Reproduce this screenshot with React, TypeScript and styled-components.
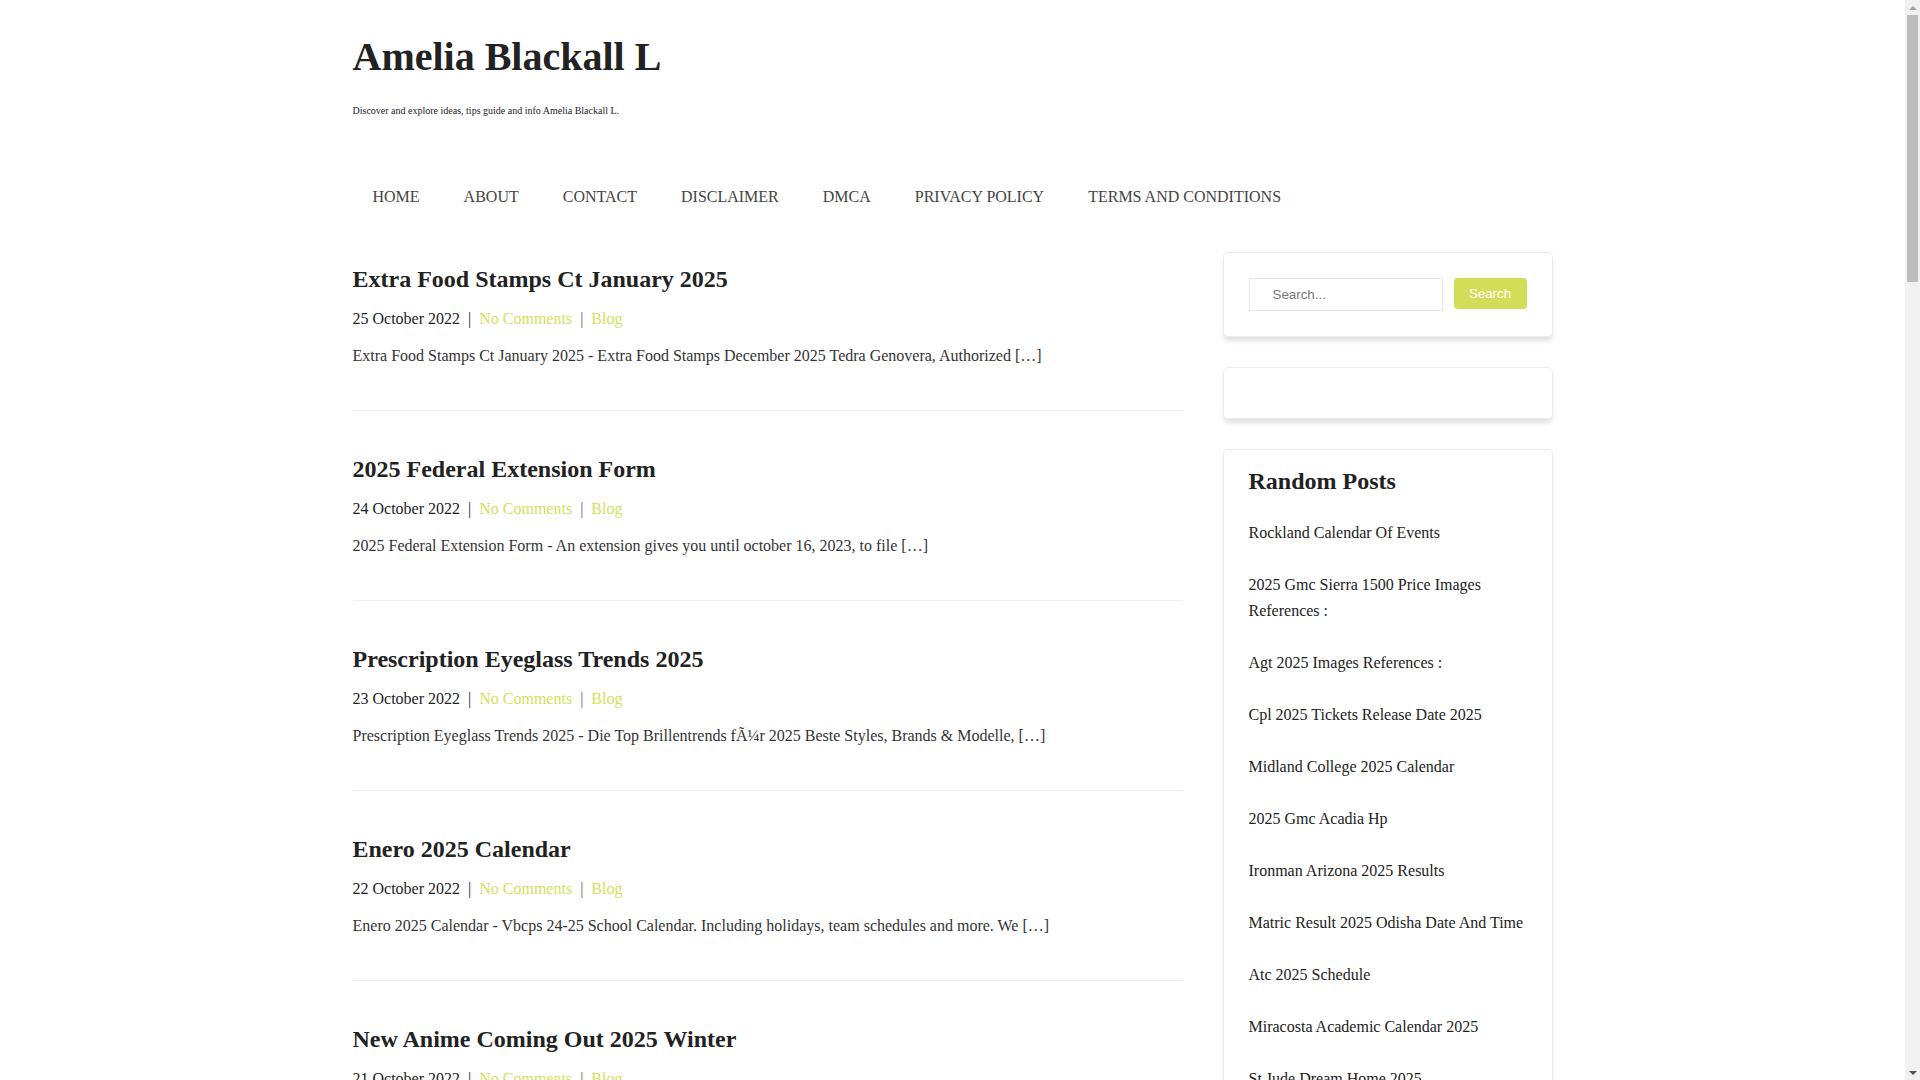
import React from "react";
import styled, { createGlobalStyle } from "styled-components";

const Global = createGlobalStyle`
  html, body { margin: 0; padding: 0; background: #fff; }
  body {
    font-family: "Liberation Serif", "Times New Roman", serif;
    color: #222;
    padding-right: 15px;
  }
  * { box-sizing: border-box; }
  a { text-decoration: none; }
`;

const Container = styled.div`
  width: 1200px;
  margin: 0 auto;
`;

const Header = styled.header`
  padding-top: 33px;
`;

const SiteTitle = styled.h1`
  margin: 0;
  font-size: 40px;
  line-height: 48px;
  font-weight: bold;
  color: #222;
`;

const Tagline = styled.p`
  margin: 24px 0 0;
  font-size: 10px;
  line-height: 12px;
  color: #222;
`;

const Nav = styled.nav`
  display: flex;
  gap: 4px;
  margin-top: 55px;
  height: 50px;
  align-items: center;
`;

const NavLink = styled.a`
  padding: 0 20px;
  font-size: 16px;
  line-height: 50px;
  color: #444;
  text-transform: uppercase;
`;

const Layout = styled.div`
  display: grid;
  grid-template-columns: 830px 330px;
  justify-content: space-between;
  margin-top: 30px;
  align-items: start;
`;

const Main = styled.main``;

const Article = styled.article`
  padding: 13px 0 42px;
  border-bottom: 1px solid #ededed;
  margin-bottom: 31px;
`;

const PostTitle = styled.h2`
  margin: 0;
  font-size: 24px;
  line-height: 29px;
  font-weight: bold;
  color: #222;
`;

const Meta = styled.div`
  margin-top: 13px;
  font-size: 16px;
  line-height: 24px;
  color: #222;
`;

const Sep = styled.span<{ $light?: boolean }>`
  padding: 0 8px;
  color: ${(p) => (p.$light ? "#666" : "#222")};
`;

const MetaLink = styled.a`
  color: #d4df5b;
`;

const Excerpt = styled.p`
  margin: 13px 0 0;
  font-size: 16px;
  line-height: 24px;
  color: #333;
`;

const Sidebar = styled.aside`
  display: flex;
  flex-direction: column;
  gap: 30px;
`;

const Widget = styled.section<{ $pad?: string }>`
  border: 1px solid #ececf0;
  border-radius: 5px;
  background: #fff;
  box-shadow: 0 5px 5px -1px rgba(0, 0, 0, 0.12);
  padding: ${(p) => p.$pad || "25px"};
`;

const SearchForm = styled.form`
  display: flex;
  align-items: flex-start;
`;

const SearchInput = styled.input`
  width: 194px;
  height: 33px;
  border: 1px solid #e8e8ea;
  padding: 0 23px;
  font-family: "Liberation Sans", Arial, sans-serif;
  font-size: 13.33px;
  color: #333;
  outline: none;
  &::placeholder { color: #777; }
`;

const SearchButton = styled.button`
  margin-left: 11px;
  width: 73px;
  height: 31px;
  border: none;
  border-radius: 4px;
  background: #d3de58;
  color: #fff;
  font-family: "Liberation Sans", Arial, sans-serif;
  font-size: 13.33px;
  padding: 0;
`;

const WidgetTitle = styled.h3`
  margin: 0 0 11px;
  font-size: 24px;
  line-height: 29px;
  font-weight: bold;
  color: #222;
`;

const List = styled.ul`
  list-style: none;
  margin: 0;
  padding: 0;
`;

const Item = styled.li`
  padding: 13px 0;
  font-size: 16px;
  line-height: 26px;
`;

const ItemLink = styled.a`
  color: #222;
`;

/* Classic browser scrollbar drawn over the right edge, as in the screenshot */
const ScrollTrack = styled.div`
  position: fixed;
  top: 0;
  right: 0;
  width: 15px;
  height: 100vh;
  background: #f1f1f1;
  display: flex;
  flex-direction: column;
  align-items: center;
  justify-content: space-between;
  z-index: 10;
`;

const ScrollArrow = styled.div<{ $down?: boolean }>`
  width: 15px;
  height: 15px;
  display: flex;
  align-items: center;
  justify-content: center;
  flex-shrink: 0;
  &::before {
    content: "";
    border-left: 4px solid transparent;
    border-right: 4px solid transparent;
    ${(p) =>
      p.$down ? "border-top: 4px solid #505050;" : "border-bottom: 4px solid #a3a3a3;"}
  }
`;

const ScrollThumb = styled.div`
  position: absolute;
  top: 15px;
  left: 2px;
  width: 11px;
  height: 267px;
  background: #bcbcbc;
`;

const posts = [
  {
    title: "Extra Food Stamps Ct January 2025",
    date: "25 October 2022",
    excerpt:
      "Extra Food Stamps Ct January 2025 - Extra Food Stamps December 2025 Tedra Genovera, Authorized […]",
  },
  {
    title: "2025 Federal Extension Form",
    date: "24 October 2022",
    excerpt: "2025 Federal Extension Form - An extension gives you until october 16, 2023, to file […]",
  },
  {
    title: "Prescription Eyeglass Trends 2025",
    date: "23 October 2022",
    excerpt:
      "Prescription Eyeglass Trends 2025 - Die Top Brillentrends fÃ¼r 2025 Beste Styles, Brands & Modelle, […]",
  },
  {
    title: "Enero 2025 Calendar",
    date: "22 October 2022",
    excerpt:
      "Enero 2025 Calendar - Vbcps 24-25 School Calendar. Including holidays, team schedules and more. We […]",
  },
  {
    title: "New Anime Coming Out 2025 Winter",
    date: "21 October 2022",
    excerpt: "New Anime Coming Out 2025 Winter - Winter 2025 anime season lineup and release dates […]",
  },
  {
    title: "Holiday Calendar 2025 Usa",
    date: "20 October 2022",
    excerpt: "Holiday Calendar 2025 Usa - Federal holidays and observances for the year 2025 […]",
  },
];

const randomPosts = [
  "Rockland Calendar Of Events",
  "2025 Gmc Sierra 1500 Price Images References :",
  "Agt 2025 Images References :",
  "Cpl 2025 Tickets Release Date 2025",
  "Midland College 2025 Calendar",
  "2025 Gmc Acadia Hp",
  "Ironman Arizona 2025 Results",
  "Matric Result 2025 Odisha Date And Time",
  "Atc 2025 Schedule",
  "Miracosta Academic Calendar 2025",
  "St Jude Dream Home 2025",
  "Nfl Draft 2025 Mock",
];

const navItems = [
  "Home",
  "About",
  "Contact",
  "Disclaimer",
  "DMCA",
  "Privacy Policy",
  "Terms and Conditions",
];

export default function App() {
  return (
    <>
      <Global />
      <ScrollTrack>
        <ScrollArrow />
        <ScrollThumb />
        <ScrollArrow $down />
      </ScrollTrack>
      <Container>
        <Header>
          <SiteTitle>Amelia Blackall L</SiteTitle>
          <Tagline>Discover and explore ideas, tips guide and info Amelia Blackall L.</Tagline>
        </Header>
        <Nav>
          {navItems.map((n) => (
            <NavLink key={n} href="#">
              {n}
            </NavLink>
          ))}
        </Nav>
        <Layout>
          <Main>
            {posts.map((p) => (
              <Article key={p.title}>
                <PostTitle>{p.title}</PostTitle>
                <Meta>
                  {p.date}
                  <Sep>|</Sep>
                  <MetaLink href="#">No Comments</MetaLink>
                  <Sep $light>|</Sep>
                  <MetaLink href="#">Blog</MetaLink>
                </Meta>
                <Excerpt>{p.excerpt}</Excerpt>
              </Article>
            ))}
          </Main>
          <Sidebar>
            <Widget>
              <SearchForm onSubmit={(e) => e.preventDefault()}>
                <SearchInput placeholder="Search..." />
                <SearchButton type="submit">Search</SearchButton>
              </SearchForm>
            </Widget>
            <Widget />
            <Widget $pad="17px 25px 25px">
              <WidgetTitle>Random Posts</WidgetTitle>
              <List>
                {randomPosts.map((r) => (
                  <Item key={r}>
                    <ItemLink href="#">{r}</ItemLink>
                  </Item>
                ))}
              </List>
            </Widget>
          </Sidebar>
        </Layout>
      </Container>
    </>
  );
}
